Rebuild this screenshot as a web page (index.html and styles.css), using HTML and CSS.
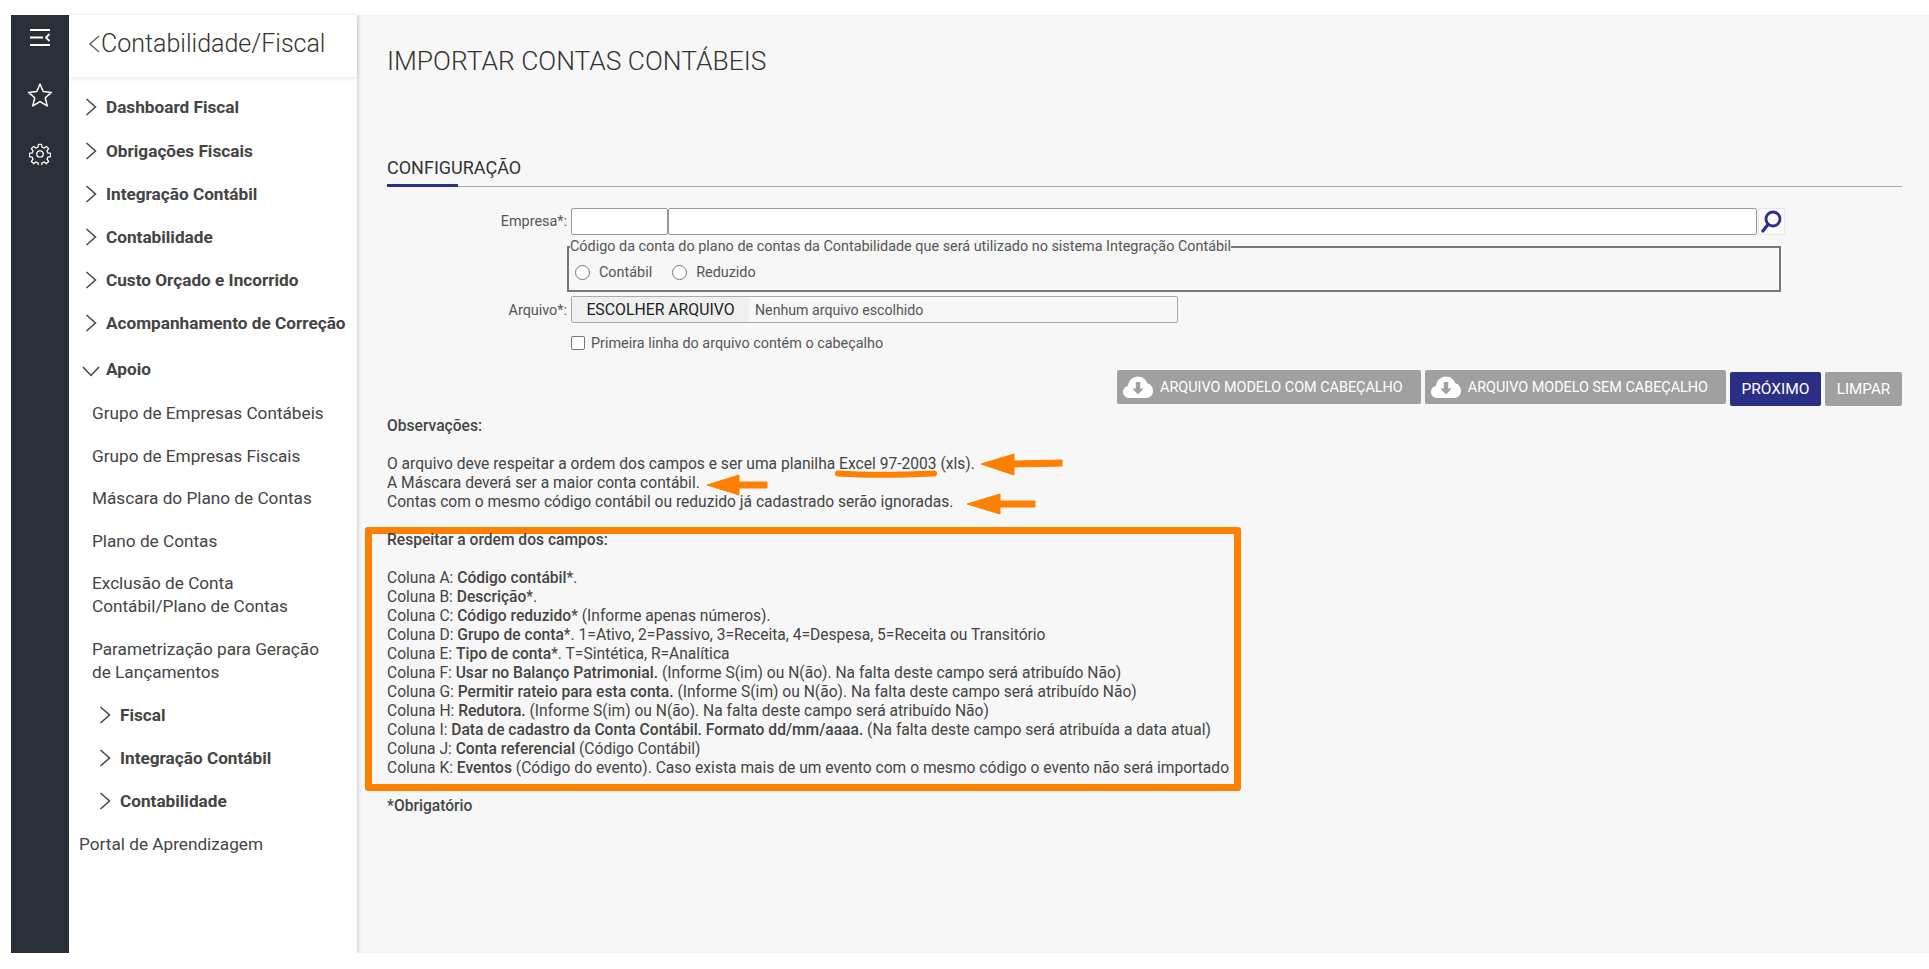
FILE: index.html
```html
<!DOCTYPE html>
<html lang="pt-BR">
<head>
<meta charset="utf-8">
<title>Importar Contas Contábeis</title>
<link rel="stylesheet" href="styles.css">
</head>
<body>
<div class="app">
  <nav class="rail">
    <svg class="rail-icon menu-icon" width="24" height="20" viewBox="0 0 24 20"><path d="M2 2h20M2 9.500h13M2 17h20M21.500 6L18 9.500l3.500 3.500" fill="none" stroke="#fff" stroke-width="1.800"/></svg>
    <svg class="rail-icon star-icon" width="26" height="26" viewBox="0 0 26 26"><path d="M13 2l3.300 7.600 8.200.8-6.200 5.400 1.900 8.100L13 19.600l-7.200 4.300 1.900-8.100L1.500 10.400l8.200-.8z" fill="none" stroke="#fff" stroke-width="1.500" stroke-linejoin="round"/></svg>
    <svg class="rail-icon gear-icon" width="22" height="22" viewBox="0 0 24 24"><circle cx="12" cy="12" r="3.500" fill="none" stroke="#fff" stroke-width="1.400"/><path d="M10.300 1.500h3.400l.5 3 2.300 1 2.500-1.800 2.400 2.400-1.800 2.500 1 2.300 3 .5v3.400l-3 .5-1 2.300 1.800 2.500-2.400 2.400-2.500-1.800-2.300 1-.5 3h-3.400l-.5-3-2.300-1-2.500 1.800-2.400-2.400 1.800-2.500-1-2.300-3-.5v-3.400l3-.5 1-2.300-1.800-2.500 2.400-2.400 2.500 1.800 2.300-1z" fill="none" stroke="#fff" stroke-width="1.400" stroke-linejoin="round"/></svg>
  </nav>

  <aside class="sidebar">
    <header class="side-head">
      <svg class="back" width="12" height="20" viewBox="0 0 12 20"><path d="M11 2L2 10l9 8" fill="none" stroke="#666" stroke-width="1.500"/></svg>
      <span>Contabilidade/Fiscal</span>
    </header>
    <ul class="menu">
      <li class="item"><svg class="chev" width="12" height="18" viewBox="0 0 12 18"><path d="M1.500 1l9 8-9 8" fill="none" stroke="#444" stroke-width="1.500"/></svg>Dashboard Fiscal</li>
      <li class="item"><svg class="chev" width="12" height="18" viewBox="0 0 12 18"><path d="M1.500 1l9 8-9 8" fill="none" stroke="#444" stroke-width="1.500"/></svg>Obrigações Fiscais</li>
      <li class="item"><svg class="chev" width="12" height="18" viewBox="0 0 12 18"><path d="M1.500 1l9 8-9 8" fill="none" stroke="#444" stroke-width="1.500"/></svg>Integração Contábil</li>
      <li class="item"><svg class="chev" width="12" height="18" viewBox="0 0 12 18"><path d="M1.500 1l9 8-9 8" fill="none" stroke="#444" stroke-width="1.500"/></svg>Contabilidade</li>
      <li class="item"><svg class="chev" width="12" height="18" viewBox="0 0 12 18"><path d="M1.500 1l9 8-9 8" fill="none" stroke="#444" stroke-width="1.500"/></svg>Custo Orçado e Incorrido</li>
      <li class="item"><svg class="chev" width="12" height="18" viewBox="0 0 12 18"><path d="M1.500 1l9 8-9 8" fill="none" stroke="#444" stroke-width="1.500"/></svg>Acompanhamento de Correção</li>
      <li class="item item-open"><svg class="chev-down" width="18" height="12" viewBox="0 0 18 12"><path d="M1 2l8 8.500L17 2" fill="none" stroke="#444" stroke-width="1.500"/></svg>Apoio</li>
      <li class="sub">Grupo de Empresas Contábeis</li>
      <li class="sub">Grupo de Empresas Fiscais</li>
      <li class="sub">Máscara do Plano de Contas</li>
      <li class="sub">Plano de Contas</li>
      <li class="sub">Exclusão de Conta<br>Contábil/Plano de Contas</li>
      <li class="sub">Parametrização para Geração<br>de Lançamentos</li>
      <li class="item item-nested"><svg class="chev" width="12" height="18" viewBox="0 0 12 18"><path d="M1.500 1l9 8-9 8" fill="none" stroke="#444" stroke-width="1.500"/></svg>Fiscal</li>
      <li class="item item-nested"><svg class="chev" width="12" height="18" viewBox="0 0 12 18"><path d="M1.500 1l9 8-9 8" fill="none" stroke="#444" stroke-width="1.500"/></svg>Integração Contábil</li>
      <li class="item item-nested"><svg class="chev" width="12" height="18" viewBox="0 0 12 18"><path d="M1.500 1l9 8-9 8" fill="none" stroke="#444" stroke-width="1.500"/></svg>Contabilidade</li>
      <li class="portal">Portal de Aprendizagem</li>
    </ul>
  </aside>

  <main class="content">
    <h1 class="title">IMPORTAR CONTAS CONTÁBEIS</h1>
    <div class="tabs"><span class="tab">CONFIGURAÇÃO</span></div>

    <form class="form">
      <div class="row">
        <label class="lbl">Empresa*:</label>
        <input class="input input-code" type="text">
        <input class="input input-name" type="text">
        <span class="search">
          <svg width="25" height="25" viewBox="0 0 25 25"><circle cx="14" cy="10" r="7" fill="none" stroke="#2a2f8f" stroke-width="2.800"/><path d="M9 15.500L3.800 22" fill="none" stroke="#2a2f8f" stroke-width="3.200" stroke-linecap="round"/></svg>
        </span>
      </div>
      <fieldset class="group">
        <legend class="legend">Código da conta do plano de contas da Contabilidade que será utilizado no sistema Integração Contábil</legend>
        <label class="radio-wrap"><span class="radio"></span>Contábil</label>
        <label class="radio-wrap"><span class="radio"></span>Reduzido</label>
      </fieldset>
      <div class="row row-file">
        <label class="lbl lbl-file">Arquivo*:</label>
        <div class="file"><span class="file-btn">ESCOLHER ARQUIVO</span><span class="file-name">Nenhum arquivo escolhido</span></div>
      </div>
      <label class="check-row"><span class="check"></span>Primeira linha do arquivo contém o cabeçalho</label>
      <div class="actions">
        <a class="btn btn-model">
          <svg width="32" height="24" viewBox="0 0 32 24"><path d="M7.500 23C3.500 23 1 20.300 1 17c0-3 2.200-5.500 5-6 .5-5.500 4.800-9.500 10-9.500 4.400 0 8 2.800 9.300 6.800C29 9.200 31 12.500 31 16c0 4-3 7-7 7z" fill="#fff"/><path d="M13.800 7h4.400v6.500h3.500L16 19.500l-5.700-6h3.500z" fill="#a0a0a0"/></svg>
          ARQUIVO MODELO COM CABEÇALHO
        </a>
        <a class="btn btn-model">
          <svg width="32" height="24" viewBox="0 0 32 24"><path d="M7.500 23C3.500 23 1 20.300 1 17c0-3 2.200-5.500 5-6 .5-5.500 4.800-9.500 10-9.500 4.400 0 8 2.800 9.300 6.800C29 9.200 31 12.500 31 16c0 4-3 7-7 7z" fill="#fff"/><path d="M13.800 7h4.400v6.500h3.500L16 19.500l-5.700-6h3.500z" fill="#a0a0a0"/></svg>
          ARQUIVO MODELO SEM CABEÇALHO
        </a>
        <a class="btn btn-primary">PRÓXIMO</a>
        <a class="btn btn-clear">LIMPAR</a>
      </div>
    </form>

    <p class="obs-title">Observações:</p>
    <p class="notes">O arquivo deve respeitar a ordem dos campos e ser uma planilha Excel 97-2003 (xls).<br>
    A Máscara deverá ser a maior conta contábil.<br>
    Contas com o mesmo código contábil ou reduzido já cadastrado serão ignoradas.</p>

    <section class="fields">
      <p class="fields-title">Respeitar a ordem dos campos:</p>
      <p class="fields-list">
        Coluna A: <b>Código contábil</b>*.<br>
        Coluna B: <b>Descrição</b>*.<br>
        Coluna C: <b>Código reduzido</b>* (Informe apenas números).<br>
        Coluna D: <b>Grupo de conta</b>*. 1=Ativo, 2=Passivo, 3=Receita, 4=Despesa, 5=Receita ou Transitório<br>
        Coluna E: <b>Tipo de conta</b>*. T=Sintética, R=Analítica<br>
        Coluna F: <b>Usar no Balanço Patrimonial.</b> (Informe S(im) ou N(ão). Na falta deste campo será atribuído Não)<br>
        Coluna G: <b>Permitir rateio para esta conta.</b> (Informe S(im) ou N(ão). Na falta deste campo será atribuído Não)<br>
        Coluna H: <b>Redutora.</b> (Informe S(im) ou N(ão). Na falta deste campo será atribuído Não)<br>
        Coluna I: <b>Data de cadastro da Conta Contábil. Formato dd/mm/aaaa.</b> (Na falta deste campo será atribuída a data atual)<br>
        Coluna J: <b>Conta referencial</b> (Código Contábil)<br>
        Coluna K: <b>Eventos</b> (Código do evento). Caso exista mais de um evento com o mesmo código o evento não será importado
      </p>
    </section>
    <p class="required">*Obrigatório</p>

    <svg class="marks" width="1572" height="938" viewBox="0 0 1572 938">
      <g fill="#ff8000" stroke="#ff8000" stroke-width="1" stroke-linejoin="round">
        <path d="M624 449l33-10v7l48-1v6l-48 1v8z"/>
        <path d="M350 470l32-10v7l28 0v6l-28 0v7z"/>
        <path d="M610 489l33-10v7l35 0v6l-35 0v7z"/>
      </g>
      <path d="M481 458.500c30 2 65 1.500 96 0" fill="none" stroke="#ff8000" stroke-width="6" stroke-linecap="round"/>
    </svg>
  </main>
</div>
</body>
</html>
```

FILE: styles.css
```css
* { box-sizing: border-box; }
html, body { margin: 0; padding: 0; background: #fff; }
body { font-family: Roboto, "Liberation Sans", sans-serif; color: #444; overflow: hidden; }

.app { display: flex; height: 938px; margin: 15px 0 0 11px; }

.rail { width: 58px; flex: none; background: #2b2f38; display: flex; flex-direction: column; align-items: center; }
.rail-icon { display: block; flex: none; }
.menu-icon { margin-top: 13px; }
.star-icon { margin-top: 34px; }
.gear-icon { margin-top: 35px; }

.sidebar { width: 288px; flex: none; background: #fff; position: relative; z-index: 1; box-shadow: 2px 0 3px rgba(0,0,0,.12); }
.side-head { height: 62px; display: flex; align-items: center; padding: 0 0 5px 19px; font-size: 25px; font-weight: 300; color: #333; box-shadow: 0 2px 4px rgba(0,0,0,.08); gap: 1px; }
.back { flex: none; }
.menu { list-style: none; margin: 8.500px 0 0; padding: 0; font-size: 17.200px; }
.item { display: flex; align-items: center; height: 43px; padding-left: 16px; font-weight: 700; color: #444; white-space: nowrap; }
.item:first-child { height: 43.500px; }
.chev { flex: none; margin-right: 9px; }
.item-open { height: 48px; padding-left: 13px; padding-top: 1px; }
.chev-down { flex: none; margin-right: 6px; margin-top: 4px; }
.sub { padding: 10px 0 9.500px 23px; line-height: 23px; color: #444; white-space: nowrap; }
.item-nested { padding-left: 30px; }
.portal { padding: 11px 0 0 10px; line-height: 23px; color: #444; }

.content { flex: 1; min-width: 0; background: #f7f7f7; padding: 31px 27px 0 30px; position: relative; font-size: 15.600px; }
.title { margin: 0; font-size: 26.400px; font-weight: 300; line-height: 30px; color: #333; white-space: nowrap; }
.tabs { margin-top: 77px; height: 34px; border-bottom: 1px solid #aaa; position: relative; }
.tab { display: inline-block; height: 34px; border-bottom: 3px solid #2a2f85; width: 71px; white-space: nowrap; font-size: 18px; line-height: 30px; color: #333; }

.form { display: block; font-size: 14.400px; }
.row { display: flex; align-items: center; height: 27px; margin-top: 21px; }
.lbl { width: 180px; flex: none; text-align: right; margin-right: 4px; color: #555; }
.lbl-file { padding-top: 2px; }
.input { height: 27px; border: 1px solid #999; border-radius: 2px; background: #fff; padding: 0; outline: none; margin: 0; }
.input-code { width: 97px; }
.input-name { width: 1089px; }
.search { width: 27px; height: 27px; margin-left: 1px; background: #fafafa; border: 1px solid #e8e8e8; display: flex; align-items: center; justify-content: center; }
.group { margin: 4px 0 0 180px; padding: 0 0 0 6px; width: 1214px; height: 53px; border: 2px solid #777; display: flex; align-items: center; gap: 20px; }
.legend { padding: 0; margin-left: -5px; font-size: 14.400px; line-height: 16px; color: #555; }
.radio-wrap { display: inline-flex; align-items: center; color: #555; }
.radio { width: 15px; height: 15px; border: 1px solid #777; border-radius: 50%; background: #fff; margin-right: 9px; }
.row-file { margin-top: 4px; }
.file { width: 607px; height: 27px; border: 1px solid #aaa; border-radius: 2px; display: flex; align-items: center; }
.file-btn { width: 177px; height: 25px; background: #efefef; color: #222; text-align: center; line-height: 25px; font-size: 15.800px; white-space: nowrap; }
.file-name { margin-left: 6px; color: #555; font-size: 14.200px; }
.check-row { display: flex; align-items: center; height: 16px; margin: 12px 0 0 184px; color: #555; }
.check { width: 14px; height: 14px; border: 1px solid #777; border-radius: 2px; background: #fff; margin-right: 6px; }
.actions { display: flex; justify-content: flex-end; gap: 4px; margin-top: 19px; height: 36px; }
.btn { display: flex; align-items: center; height: 34px; color: #fff; background: #a0a0a0; border-radius: 2px; white-space: nowrap; }
.btn-model { padding: 0 18px 0 5px; gap: 6px; font-size: 14.400px; }
.btn-primary { margin-top: 2px; background: #2a2f85; width: 91px; justify-content: center; font-size: 15.500px; }
.btn-clear { margin-top: 2px; width: 77px; justify-content: center; font-size: 15.200px; }

.obs-title { margin: 11px 0 0; line-height: 19px; font-weight: 500; }
.notes { margin: 19px 0 0; line-height: 19px; }
.fields { margin: 15px 0 0 -22px; width: 876px; height: 264px; border: 7px solid #ff8000; border-radius: 3px; padding: 0 0 0 15px; }
.fields-title { margin: -3px 0 0; line-height: 19px; font-weight: 500; }
.fields-list { margin: 19px 0 0; line-height: 19px; white-space: nowrap; }
.fields-list b { font-weight: 500; }
.required { margin: 6px 0 0; line-height: 19px; font-weight: 500; }
.marks { position: absolute; left: 0; top: 0; pointer-events: none; }
```
